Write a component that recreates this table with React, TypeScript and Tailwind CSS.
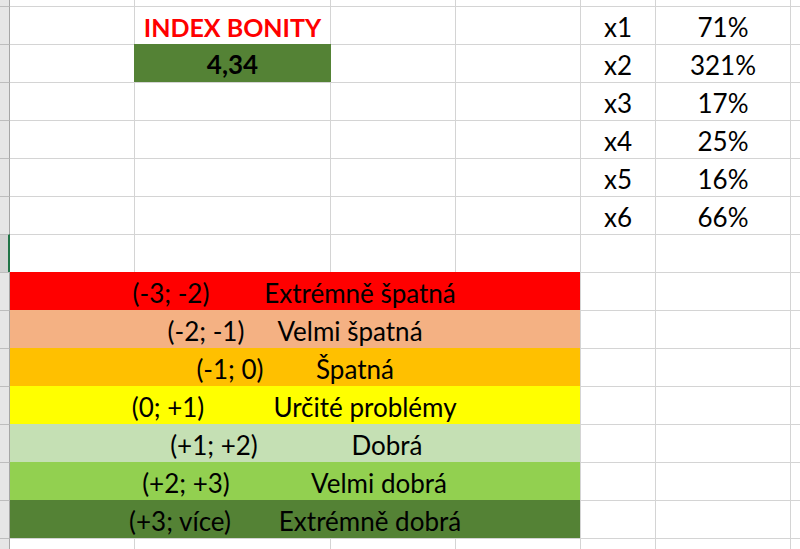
import React from "react";

type Band = { bg: string; range: string; label: string; m1: string; m2: string };

const bands: Band[] = [
  { bg: "bg-[#ff0000]", range: "(-3; -2)", label: "Extrémně špatná", m1: "ml-[96px]", m2: "ml-[4px]" },
  { bg: "bg-[#f4b183]", range: "(-2; -1)", label: "Velmi špatná", m1: "ml-[131px]", m2: "ml-[-41px]" },
  { bg: "bg-[#ffc000]", range: "(-1; 0)", label: "Špatná", m1: "ml-[155px]", m2: "ml-[-60px]" },
  { bg: "bg-[#ffff00]", range: "(0; +1)", label: "Určité problémy", m1: "ml-[93px]", m2: "ml-[12px]" },
  { bg: "bg-[#c5e0b4]", range: "(+1; +2)", label: "Dobrá", m1: "ml-[139px]", m2: "ml-[-12px]" },
  { bg: "bg-[#92d050]", range: "(+2; +3)", label: "Velmi dobrá", m1: "ml-[111px]", m2: "ml-[8px]" },
  { bg: "bg-[#548235]", range: "(+3; více)", label: "Extrémně dobrá", m1: "ml-[105px]", m2: "ml-[5px]" },
];

const ratios = [
  ["x1", "71%"],
  ["x2", "321%"],
  ["x3", "17%"],
  ["x4", "25%"],
  ["x5", "16%"],
  ["x6", "66%"],
];

type CellProps = {
  w: string;
  left?: boolean;
  top?: boolean;
  className?: string;
  children?: React.ReactNode;
};

const Cell = ({ w, left = true, top = true, className = "", children }: CellProps) => (
  <div
    className={`${w} flex shrink-0 justify-center overflow-hidden whitespace-nowrap border-[#d4d4d4] ${left ? "border-l" : ""} ${top ? "border-t" : ""} ${className}`}
  >
    {children}
  </div>
);

type RowProps = { h?: string; top?: boolean; active?: boolean; children?: React.ReactNode };

const SheetRow = ({ h = "h-[38px]", top = true, active = false, children }: RowProps) => (
  <div className={`flex ${h}`}>
    <div
      className={`w-[10px] shrink-0 ${active ? "border-r-2 border-r-[#217346] bg-[#d2d2d2]" : "border-r border-r-[#a6a6a6] bg-[#e6e6e6]"} ${top ? "border-t border-t-[#bdbdbd]" : ""}`}
    />
    {children}
  </div>
);

const App = () => {
  return (
    <div className="h-[549px] w-[800px] overflow-hidden bg-white font-['Lato','Noto_Sans',sans-serif] text-[26px] leading-[40px] text-black">
      <SheetRow h="h-[6px]" top={false}>
        <Cell w="w-[124px]" left={false} top={false} />
        <Cell w="w-[196px]" top={false} />
        <Cell w="w-[125px]" top={false} />
        <Cell w="w-[125px]" top={false} />
        <Cell w="w-[75px]" top={false} />
        <Cell w="w-[135px]" top={false} />
        <Cell w="flex-1" top={false} />
      </SheetRow>

      {ratios.map(([name, value], i) => (
        <SheetRow key={name}>
          <Cell w="w-[124px]" left={false} />
          {i === 0 ? (
            <Cell w="w-[196px]" className="text-[25px] font-bold text-[#ff0000]">
              INDEX BONITY
            </Cell>
          ) : i === 1 ? (
            <Cell w="w-[197px]" left={false} top={false} className="bg-[#548235] font-bold">
              4,34
            </Cell>
          ) : (
            <Cell w="w-[196px]" />
          )}
          <Cell w={i === 1 ? "w-[124px]" : "w-[125px]"} left={i !== 1} />
          <Cell w="w-[125px]" />
          <Cell w="w-[75px]">{name}</Cell>
          <Cell w="w-[135px]">{value}</Cell>
          <Cell w="flex-1" />
        </SheetRow>
      ))}

      <SheetRow active>
        <Cell w="w-[124px]" left={false} />
        <Cell w="w-[196px]" />
        <Cell w="w-[125px]" />
        <Cell w="w-[125px]" />
        <Cell w="w-[75px]" />
        <Cell w="w-[135px]" />
        <Cell w="flex-1" />
      </SheetRow>

      {bands.map((band) => (
        <SheetRow key={band.range}>
          <div className={`flex h-[38px] w-[570px] shrink-0 overflow-hidden whitespace-nowrap leading-[42px] ${band.bg}`}>
            <div className={`flex w-[130px] shrink-0 justify-center ${band.m1}`}>{band.range}</div>
            <div className={`flex w-[240px] shrink-0 justify-center ${band.m2}`}>{band.label}</div>
          </div>
          <Cell w="w-[75px]" />
          <Cell w="w-[135px]" />
          <Cell w="flex-1" />
        </SheetRow>
      ))}

      <SheetRow h="h-[11px]">
        <Cell w="w-[124px]" left={false} />
        <Cell w="w-[196px]" />
        <Cell w="w-[125px]" />
        <Cell w="w-[125px]" />
        <Cell w="w-[75px]" />
        <Cell w="w-[135px]" />
        <Cell w="flex-1" />
      </SheetRow>
    </div>
  );
};

export default App;
